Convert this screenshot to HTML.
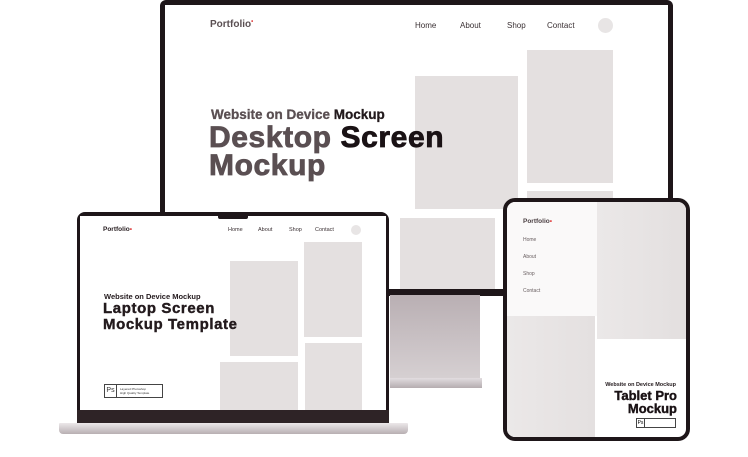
<!DOCTYPE html>
<html><head><style>
*{margin:0;padding:0;box-sizing:border-box}
body{width:748px;height:457px;background:#fff;position:relative;overflow:hidden;font-family:"Liberation Sans",sans-serif}
.a{position:absolute}
.g{background:#e4e0e0}
.nav{font-size:8px;color:#3a3033}
.b{font-weight:bold}
</style></head><body>
<!-- Monitor -->
<div class="a" style="left:160px;top:0;width:513px;height:296px;background:#1e1619;border-radius:6px 6px 0 0"></div>
<div class="a" style="left:165px;top:5px;width:503px;height:284px;background:#fff"></div>
<div class="a b" style="left:210px;top:19px;font-size:10px;color:#5a4f52">Portfolio<span style="color:#e04040;font-size:6px;vertical-align:top">•</span></div>
<div class="a nav" style="left:415px;top:21px">Home</div>
<div class="a nav" style="left:460px;top:21px">About</div>
<div class="a nav" style="left:507px;top:21px">Shop</div>
<div class="a nav" style="left:547px;top:21px">Contact</div>
<div class="a" style="left:598px;top:18px;width:15px;height:15px;border-radius:50%;background:#e8e5e5"></div>
<div class="a g" style="left:415px;top:76px;width:103px;height:133px"></div>
<div class="a g" style="left:527px;top:50px;width:86px;height:133px"></div>
<div class="a g" style="left:527px;top:191px;width:86px;height:100px"></div>
<div class="a g" style="left:400px;top:218px;width:95px;height:71px"></div>
<div class="a b" style="left:211px;top:107px;font-size:13.5px;color:#5a4f52;-webkit-text-stroke:0.3px">Website on Device <span style="color:#231a1d">Mockup</span></div>
<div class="a b" style="left:209px;top:124px;font-size:30px;line-height:28px;color:#5a4f52;letter-spacing:0.6px;-webkit-text-stroke:0.8px">Desktop <span style="color:#1a1215">Screen</span><br>Mockup</div>
<!-- stand -->
<div class="a" style="left:390px;top:295px;width:90px;height:84px;background:linear-gradient(#b9afb3,#d6d0d2)"></div>
<div class="a" style="left:390px;top:378px;width:92px;height:10px;background:linear-gradient(#e2dde0,#b5adb0)"></div>
<!-- Laptop -->
<div class="a" style="left:77px;top:212px;width:312px;height:212px;background:#1e1619;border-radius:8px 8px 0 0"></div>
<div class="a" style="left:80px;top:216px;width:306px;height:194px;background:#fff"></div>
<div class="a" style="left:218px;top:212px;width:30px;height:7px;background:#1e1619;border-radius:0 0 2px 2px"></div>
<div class="a" style="left:77px;top:410px;width:312px;height:13px;background:#2e2326"></div>
<div class="a" style="left:59px;top:423px;width:349px;height:11px;background:linear-gradient(#ece8ea,#b8afb2);border-radius:1px 1px 4px 4px"></div>
<div class="a b" style="left:103px;top:226px;font-size:6.5px;color:#2a2023">Portfolio<span style="color:#e04040">•</span></div>
<div class="a" style="left:228px;top:227px;font-size:5.5px;color:#3a3033">Home</div>
<div class="a" style="left:258px;top:227px;font-size:5.5px;color:#3a3033">About</div>
<div class="a" style="left:289px;top:227px;font-size:5.5px;color:#3a3033">Shop</div>
<div class="a" style="left:315px;top:227px;font-size:5.5px;color:#3a3033">Contact</div>
<div class="a" style="left:351px;top:225px;width:10px;height:10px;border-radius:50%;background:#e8e5e5"></div>
<div class="a g" style="left:230px;top:261px;width:68px;height:95px"></div>
<div class="a g" style="left:304px;top:242px;width:58px;height:95px"></div>
<div class="a g" style="left:220px;top:362px;width:78px;height:48px"></div>
<div class="a g" style="left:305px;top:343px;width:57px;height:67px"></div>
<div class="a b" style="left:104px;top:292px;font-size:7.5px;color:#231a1d">Website on Device Mockup</div>
<div class="a b" style="left:103px;top:301px;font-size:15px;line-height:16px;color:#231a1d;letter-spacing:0.6px;-webkit-text-stroke:0.4px">Laptop Screen<br>Mockup Template</div>
<div class="a" style="left:104px;top:384px;width:59px;height:14px;border:1px solid #444;font-size:3px;color:#333;background:#fff"><span style="position:absolute;left:0;top:0;width:12px;height:12px;border-right:1px solid #444;font-size:7px;text-align:center;line-height:12px">Ps</span><span style="position:absolute;left:15px;top:2px;line-height:4px">Layered Photoshop<br>High Quality Template</span></div>
<!-- Tablet -->
<div class="a" style="left:503px;top:198px;width:187px;height:243px;background:#1e1619;border-radius:12px"></div>
<div class="a" style="left:507px;top:202px;width:179px;height:235px;background:#fff;border-radius:8px;overflow:hidden">
 <div class="a" style="left:0;top:0;width:90px;height:114px;background:#faf9f9"></div>
 <div class="a" style="left:90px;top:0;width:89px;height:137px;background:linear-gradient(90deg,#ebe8e8,#e3dfdf)"></div>
 <div class="a" style="left:0;top:114px;width:88px;height:121px;background:linear-gradient(90deg,#ebe8e8,#e4e0e0)"></div>
</div>
<div class="a b" style="left:523px;top:218px;font-size:6.5px;color:#4a3f42">Portfolio<span style="color:#e04040">•</span></div>
<div class="a" style="left:523px;top:237px;font-size:5px;color:#6a6062">Home</div>
<div class="a" style="left:523px;top:254px;font-size:5px;color:#6a6062">About</div>
<div class="a" style="left:523px;top:271px;font-size:5px;color:#6a6062">Shop</div>
<div class="a" style="left:523px;top:288px;font-size:5px;color:#6a6062">Contact</div>
<div class="a b" style="right:72px;top:382px;font-size:5.5px;color:#231a1d;text-align:right">Website on Device Mockup</div>
<div class="a b" style="right:71px;top:389px;font-size:13px;line-height:13px;color:#1a1215;text-align:right;-webkit-text-stroke:0.4px">Tablet Pro<br>Mockup</div>
<div class="a" style="left:636px;top:418px;width:40px;height:10px;border:1px solid #444;background:#fff"><span style="position:absolute;left:0;top:0;width:8px;height:8px;border-right:1px solid #444;font-size:5px;text-align:center;line-height:8px">Ps</span></div>
</body></html>
